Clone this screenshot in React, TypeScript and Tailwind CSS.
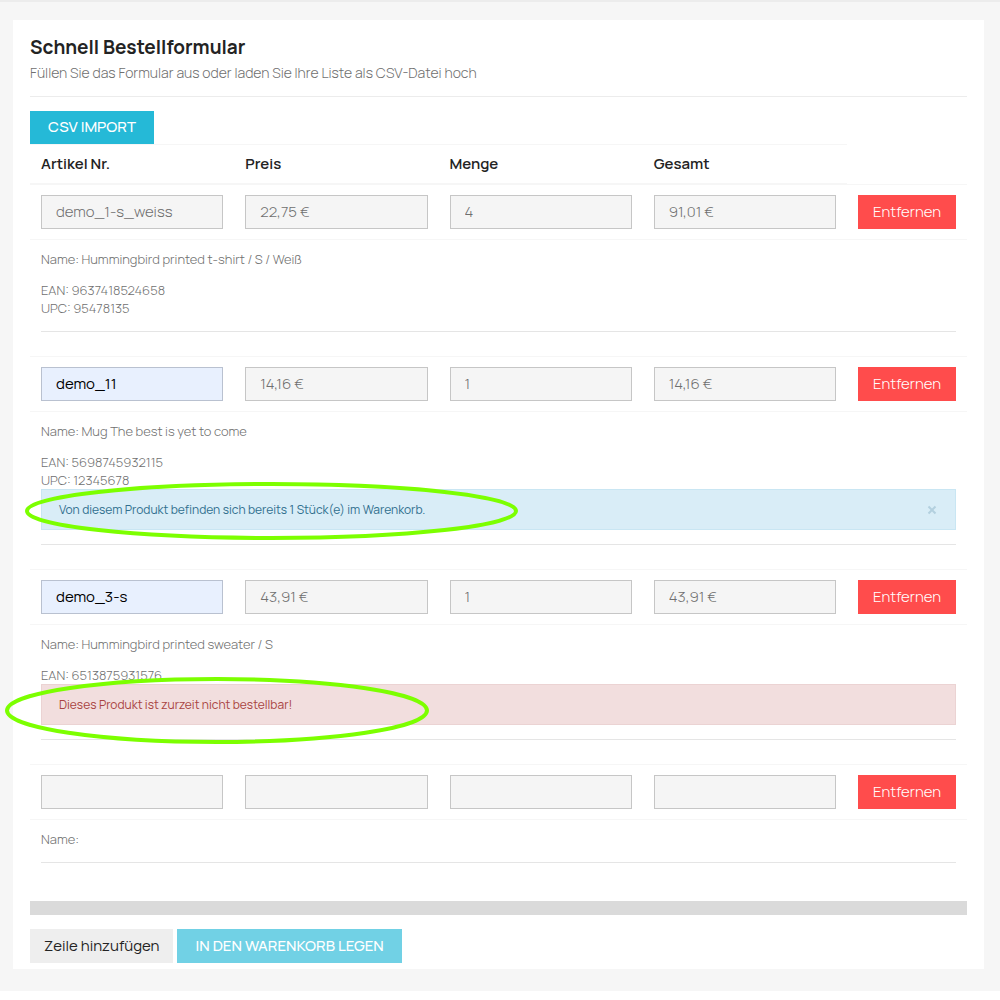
import React from "react";

type Ellipse = { box: string; width: number; height: number };

type Notice = {
  kind: "info" | "danger";
  text: string;
  closable?: boolean;
  ellipse: Ellipse;
};

type Item = {
  sku: string;
  price: string;
  quantity: string;
  total: string;
  name: string;
  codes: string[];
  editable?: boolean;
  notice?: Notice;
};

const columns = ["Artikel Nr.", "Preis", "Menge", "Gesamt"];

const items: Item[] = [
  {
    sku: "demo_1-s_weiss",
    price: "22,75 €",
    quantity: "4",
    total: "91,01 €",
    name: "Hummingbird printed t-shirt / S / Weiß",
    codes: ["EAN: 9637418524658", "UPC: 95478135"],
  },
  {
    sku: "demo_11",
    price: "14,16 €",
    quantity: "1",
    total: "14,16 €",
    name: "Mug The best is yet to come",
    codes: ["EAN: 5698745932115", "UPC: 12345678"],
    editable: true,
    notice: {
      kind: "info",
      text: "Von diesem Produkt befinden sich bereits 1 Stück(e) im Warenkorb.",
      closable: true,
      ellipse: { box: "-left-[17px] -top-2", width: 493, height: 58 },
    },
  },
  {
    sku: "demo_3-s",
    price: "43,91 €",
    quantity: "1",
    total: "43,91 €",
    name: "Hummingbird printed sweater / S",
    codes: ["EAN: 6513875931576"],
    editable: true,
    notice: {
      kind: "danger",
      text: "Dieses Produkt ist zurzeit nicht bestellbar!",
      ellipse: { box: "-left-[37px] -top-2", width: 424, height: 67 },
    },
  },
  { sku: "", price: "", quantity: "", total: "", name: "", codes: [] },
];

function Field({ label, value, editable }: { label: string; value: string; editable?: boolean }) {
  return (
    <input
      type="text"
      aria-label={label}
      defaultValue={value}
      readOnly={!editable}
      className={
        editable
          ? "block h-[34px] w-full border border-[#b9c1d0] bg-[#e8f0fe] px-3.5 pb-0.5 text-[15px] text-black outline-none"
          : "block h-[34px] w-full border border-[#c6c6c6] bg-[#f5f5f5] px-3.5 pb-0.5 text-[15px] font-light text-[#6f6f6f] outline-none"
      }
    />
  );
}

function Alert({ notice }: { notice: Notice }) {
  const { width, height, box } = notice.ellipse;
  return (
    <div
      role="alert"
      className={
        notice.kind === "info"
          ? "relative flex h-[41px] items-center justify-between border border-[#c9e6f3] bg-[#d9edf7] px-[17px] text-xs text-[#31708f]"
          : "relative flex h-[41px] items-center justify-between border border-[#ebd3d3] bg-[#f2dede] px-[17px] text-xs text-[#a94442]"
      }
    >
      <span>{notice.text}</span>
      {notice.closable && (
        <button type="button" aria-label="Schließen" className="text-[#b3d0df]">
          <svg width="12" height="12" viewBox="0 0 12 12" stroke="currentColor" strokeWidth="2">
            <path d="M2.5 2.5l7 7M9.5 2.5l-7 7" />
          </svg>
        </button>
      )}
      <svg
        width={width}
        height={height}
        className={"pointer-events-none absolute z-10 max-w-none " + box}
        fill="none"
        stroke="#7cff00"
        strokeWidth="4"
      >
        <ellipse cx={width / 2} cy={height / 2} rx={width / 2 - 2} ry={height / 2 - 2} />
      </svg>
    </div>
  );
}

function ItemRows({ item }: { item: Item }) {
  const cell = "border-t border-[#f6f6f6] px-[11px] py-2.5";
  return (
    <>
      <tr>
        <td className={cell}>
          <Field label="Artikel Nr." value={item.sku} editable={item.editable} />
        </td>
        <td className={cell}>
          <Field label="Preis" value={item.price} />
        </td>
        <td className={cell}>
          <Field label="Menge" value={item.quantity} />
        </td>
        <td className={cell}>
          <Field label="Gesamt" value={item.total} />
        </td>
        <td className={cell}>
          <button type="button" className="block h-[34px] w-full bg-[#ff4c4c] text-[15px] font-light text-white">
            Entfernen
          </button>
        </td>
      </tr>
      <tr>
        <td colSpan={5} className={cell}>
          <p className="text-[13px] leading-[18px] font-light text-[#6f6f6f]">Name: {item.name}</p>
          {item.codes.length > 0 && (
            <div className="mt-[13px] text-[13px] leading-[18px] font-light text-[#6f6f6f]">
              {item.codes.map((code) => (
                <p key={code}>{code}</p>
              ))}
            </div>
          )}
          {item.notice && <Alert notice={item.notice} />}
          <hr className="my-3.5 border-[#e5e5e5]" />
        </td>
      </tr>
    </>
  );
}

export default function App() {
  return (
    <div className="min-h-screen bg-white font-['Manrope',Inter,sans-serif] text-[#7a7a7a]">
      <div className="border-t-2 border-[#ececec] bg-[#f6f6f6] pt-[18px] pr-4 pb-[22px] pl-[13px]">
        <main className="bg-white px-[17px] pt-[15px] pb-1.5">
          <h1 className="text-[19px] leading-6 font-bold text-[#232323]">Schnell Bestellformular</h1>
          <p className="mt-1 text-sm leading-5 font-light text-[#6f6f6f]">
            Füllen Sie das Formular aus oder laden Sie Ihre Liste als CSV-Datei hoch
          </p>
          <hr className="mt-[13px] mb-3.5 border-[#ececec]" />
          <button type="button" className="block h-[33px] bg-[#25b9d7] px-[18px] text-[15px] font-medium text-white">
            CSV IMPORT
          </button>
          <form onSubmit={(e) => e.preventDefault()}>
            <table className="w-full table-fixed border-separate border-spacing-0">
              <thead>
                <tr className="h-10 text-left text-[15px] text-[#232323]">
                  {columns.map((c) => (
                    <th key={c} scope="col" className="border-y border-[#f6f6f6] px-[11px] font-semibold">
                      {c}
                    </th>
                  ))}
                  <td className="w-[120px]" />
                </tr>
              </thead>
              <tbody>
                {items.map((item, i) => (
                  <ItemRows key={i} item={item} />
                ))}
              </tbody>
            </table>
            <div className="mt-3.5 h-3.5 bg-[#dadada]" />
            <div className="mt-3.5 flex gap-1">
              <button type="button" className="h-[34px] bg-[#eeeeee] px-3.5 text-[15px] text-[#232323]">
                Zeile hinzufügen
              </button>
              <button type="submit" className="h-[34px] bg-[#71d1e5] px-[18px] text-[15px] font-medium text-white">
                IN DEN WARENKORB LEGEN
              </button>
            </div>
          </form>
        </main>
      </div>
    </div>
  );
}
